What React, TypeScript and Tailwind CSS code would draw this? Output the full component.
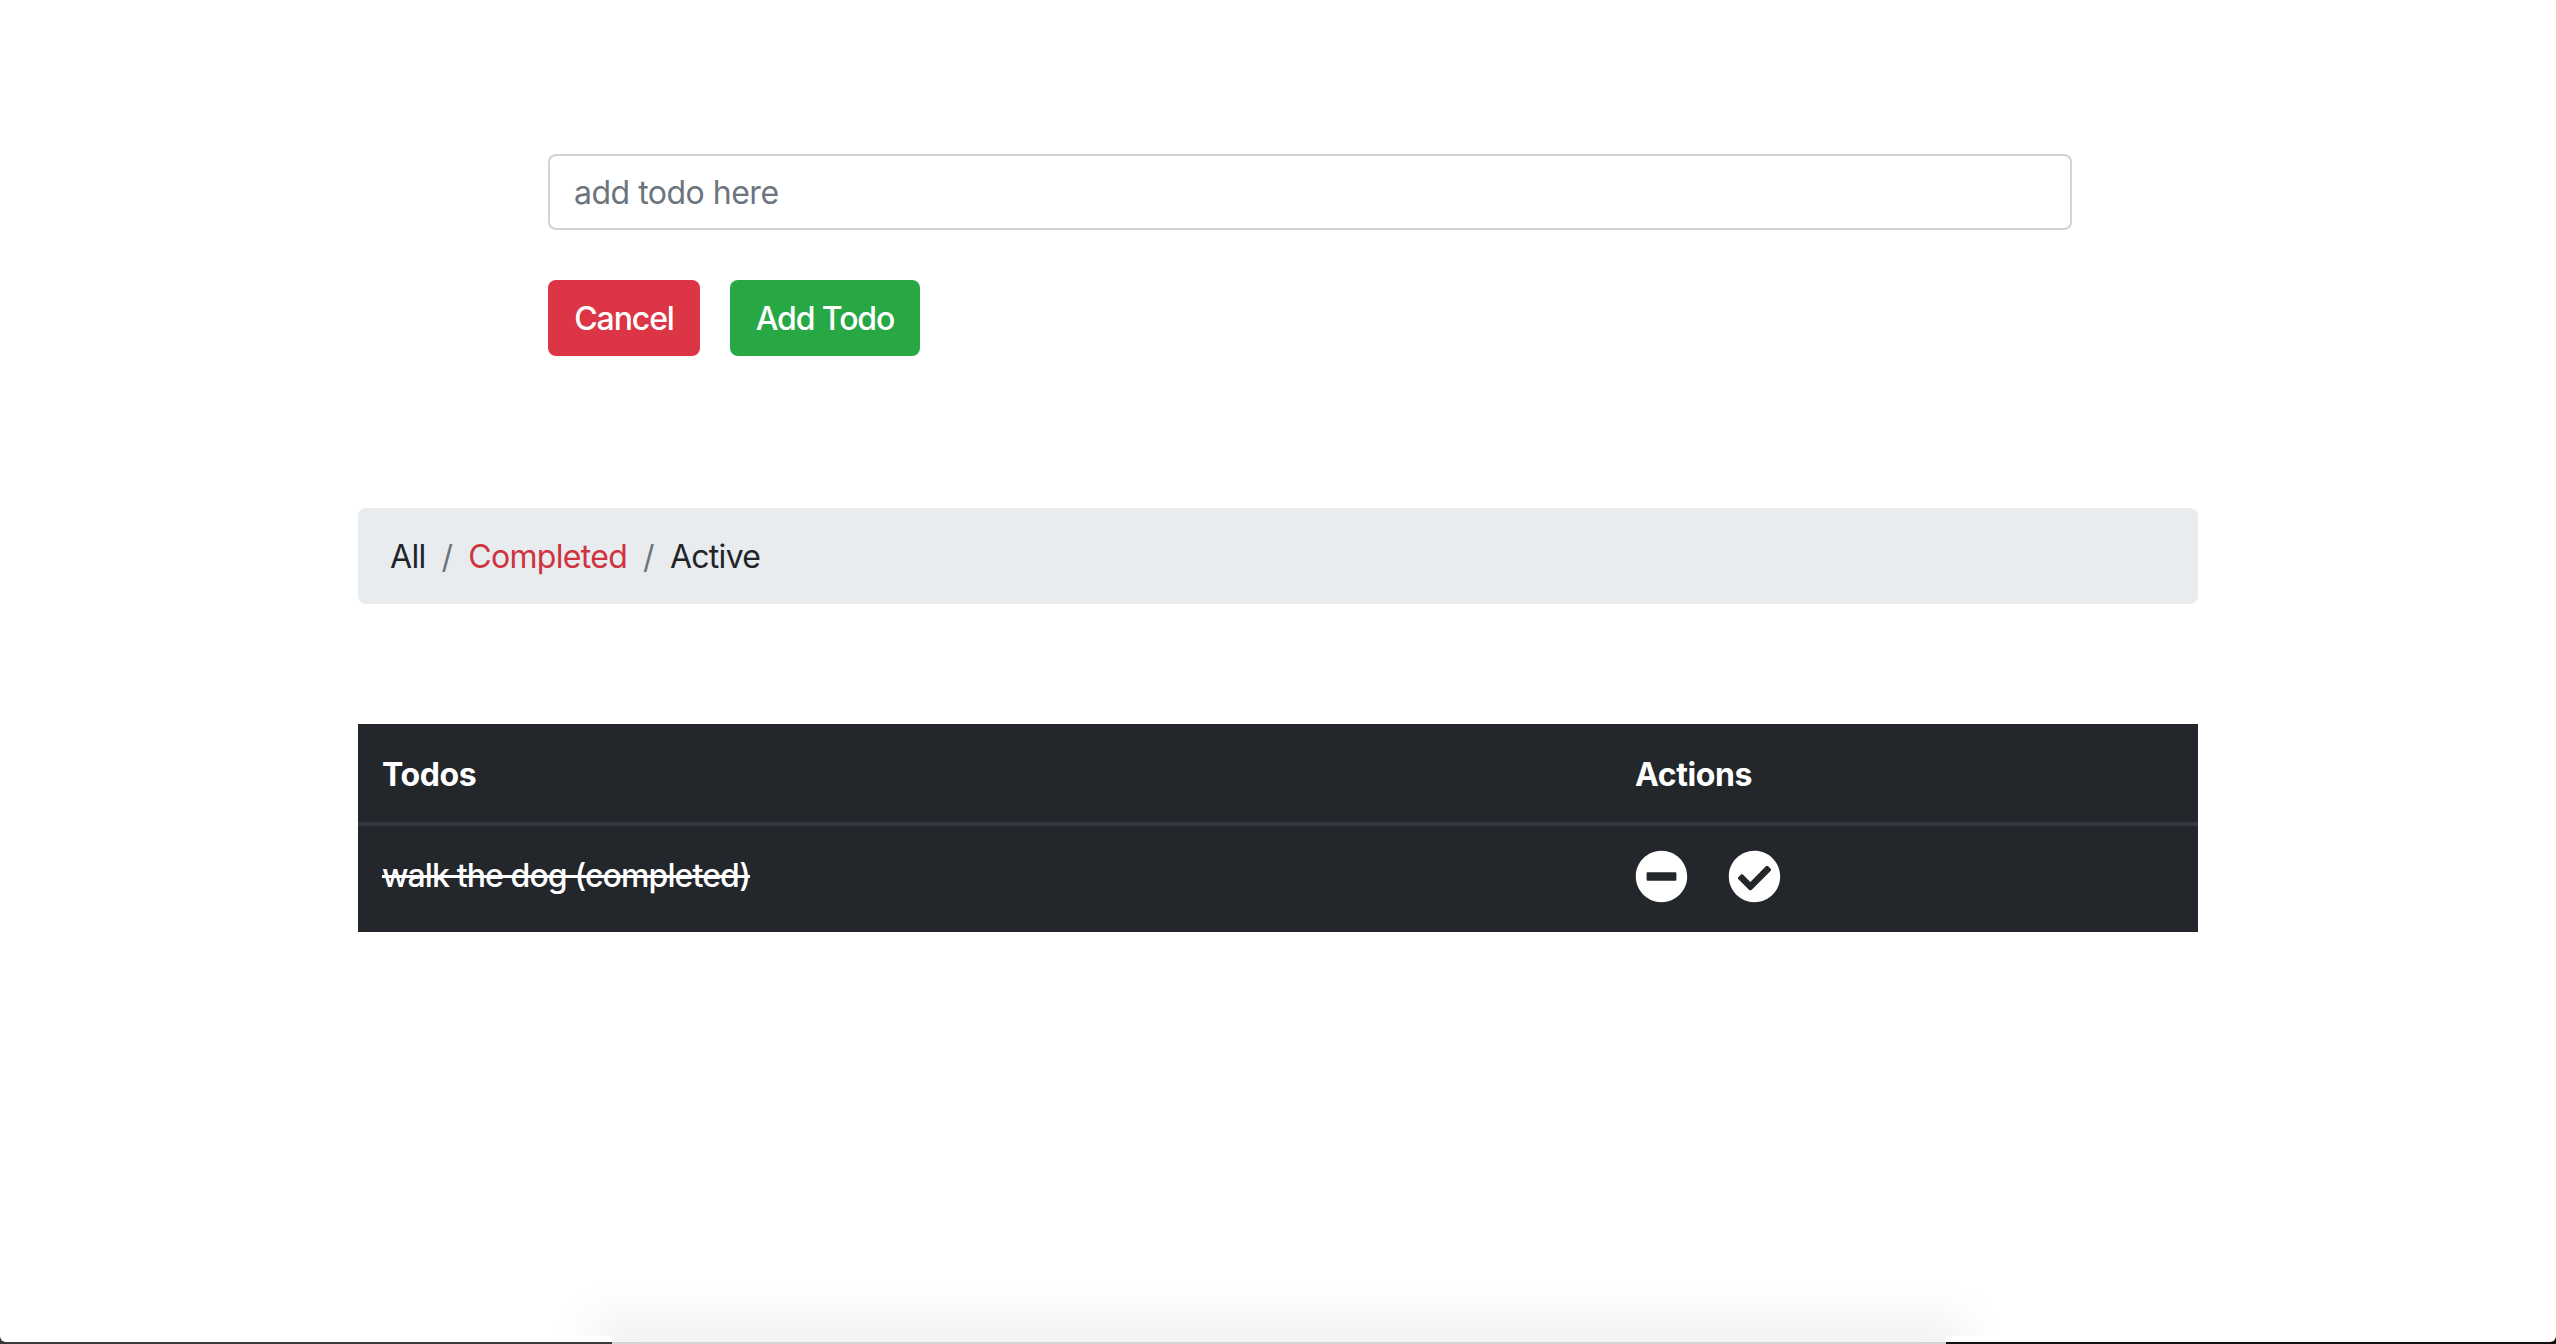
import { FaCheckCircle, FaMinusCircle } from "react-icons/fa";

export default function App() {
  return (
    <div className="flex min-h-screen flex-col bg-white font-['Inter',sans-serif] text-[32px] leading-[48px] tracking-[-0.7px] text-[#212529]">
      <main className="mx-auto w-[1840px] grow pt-[154px]">
        <form className="ml-[190px] w-[1524px]">
          <input
            type="text"
            placeholder="add todo here"
            className="block h-[76px] w-full rounded-lg border-2 border-[#ced4da] bg-white px-[24px] text-[32px] tracking-[-0.5px] placeholder:text-[#6c757d]"
          />
          <div className="mt-[50px] flex gap-[30px]">
            <button type="button" className="h-[76px] w-[152px] rounded-lg bg-[#dc3545] pt-[2px] font-medium tracking-[-1.1px] text-white">
              Cancel
            </button>
            <button type="button" className="h-[76px] w-[190px] rounded-lg bg-[#28a745] pt-[2px] font-medium tracking-[-1.1px] text-white">
              Add Todo
            </button>
          </div>
        </form>

        <nav className="mt-[152px] flex h-[96px] items-center rounded-lg bg-[#e9ecef] px-[32px] pt-[2px]">
          <a>All</a>
          <span className="px-[16px] text-[#6c757d]">/</span>
          <a className="text-[#cf3340]">Completed</a>
          <span className="px-[16px] text-[#6c757d]">/</span>
          <a>Active</a>
        </nav>

        <table className="mt-[120px] w-full table-fixed bg-[#23272b] text-white">
          <thead>
            <tr className="h-[100px] border-b-4 border-[#32383e] text-left">
              <th className="w-[1253px] px-[24px] pt-[4px] font-bold tracking-[-0.4px]">Todos</th>
              <th className="px-[24px] pt-[4px] font-bold tracking-[-0.4px]">Actions</th>
            </tr>
          </thead>
          <tbody>
            <tr className="h-[108px]">
              <td className="px-[24px] pb-[6px] font-medium tracking-[-0.9px] line-through">walk the dog (completed)</td>
              <td className="px-[24px] pb-[6px]">
                <div className="flex items-center gap-[40px]">
                  <FaMinusCircle className="size-[53px]" />
                  <FaCheckCircle className="size-[53px]" />
                </div>
              </td>
            </tr>
          </tbody>
        </table>
      </main>

      <footer className="flex h-[8px] items-end">
        <div className="relative z-10 h-[8px] w-[612px] bg-[#3a3a3a]">
          <div className="h-[6px] rounded-bl-[6px] bg-white" />
        </div>
        <div className="h-[2px] grow bg-[#d4d4d4] shadow-[0_0_50px_20px_rgba(0,0,0,0.08)]" />
        <div className="relative z-10 h-[8px] w-[610px] bg-[#111111]">
          <div className="h-[6px] rounded-br-[6px] bg-white" />
        </div>
      </footer>
    </div>
  );
}
